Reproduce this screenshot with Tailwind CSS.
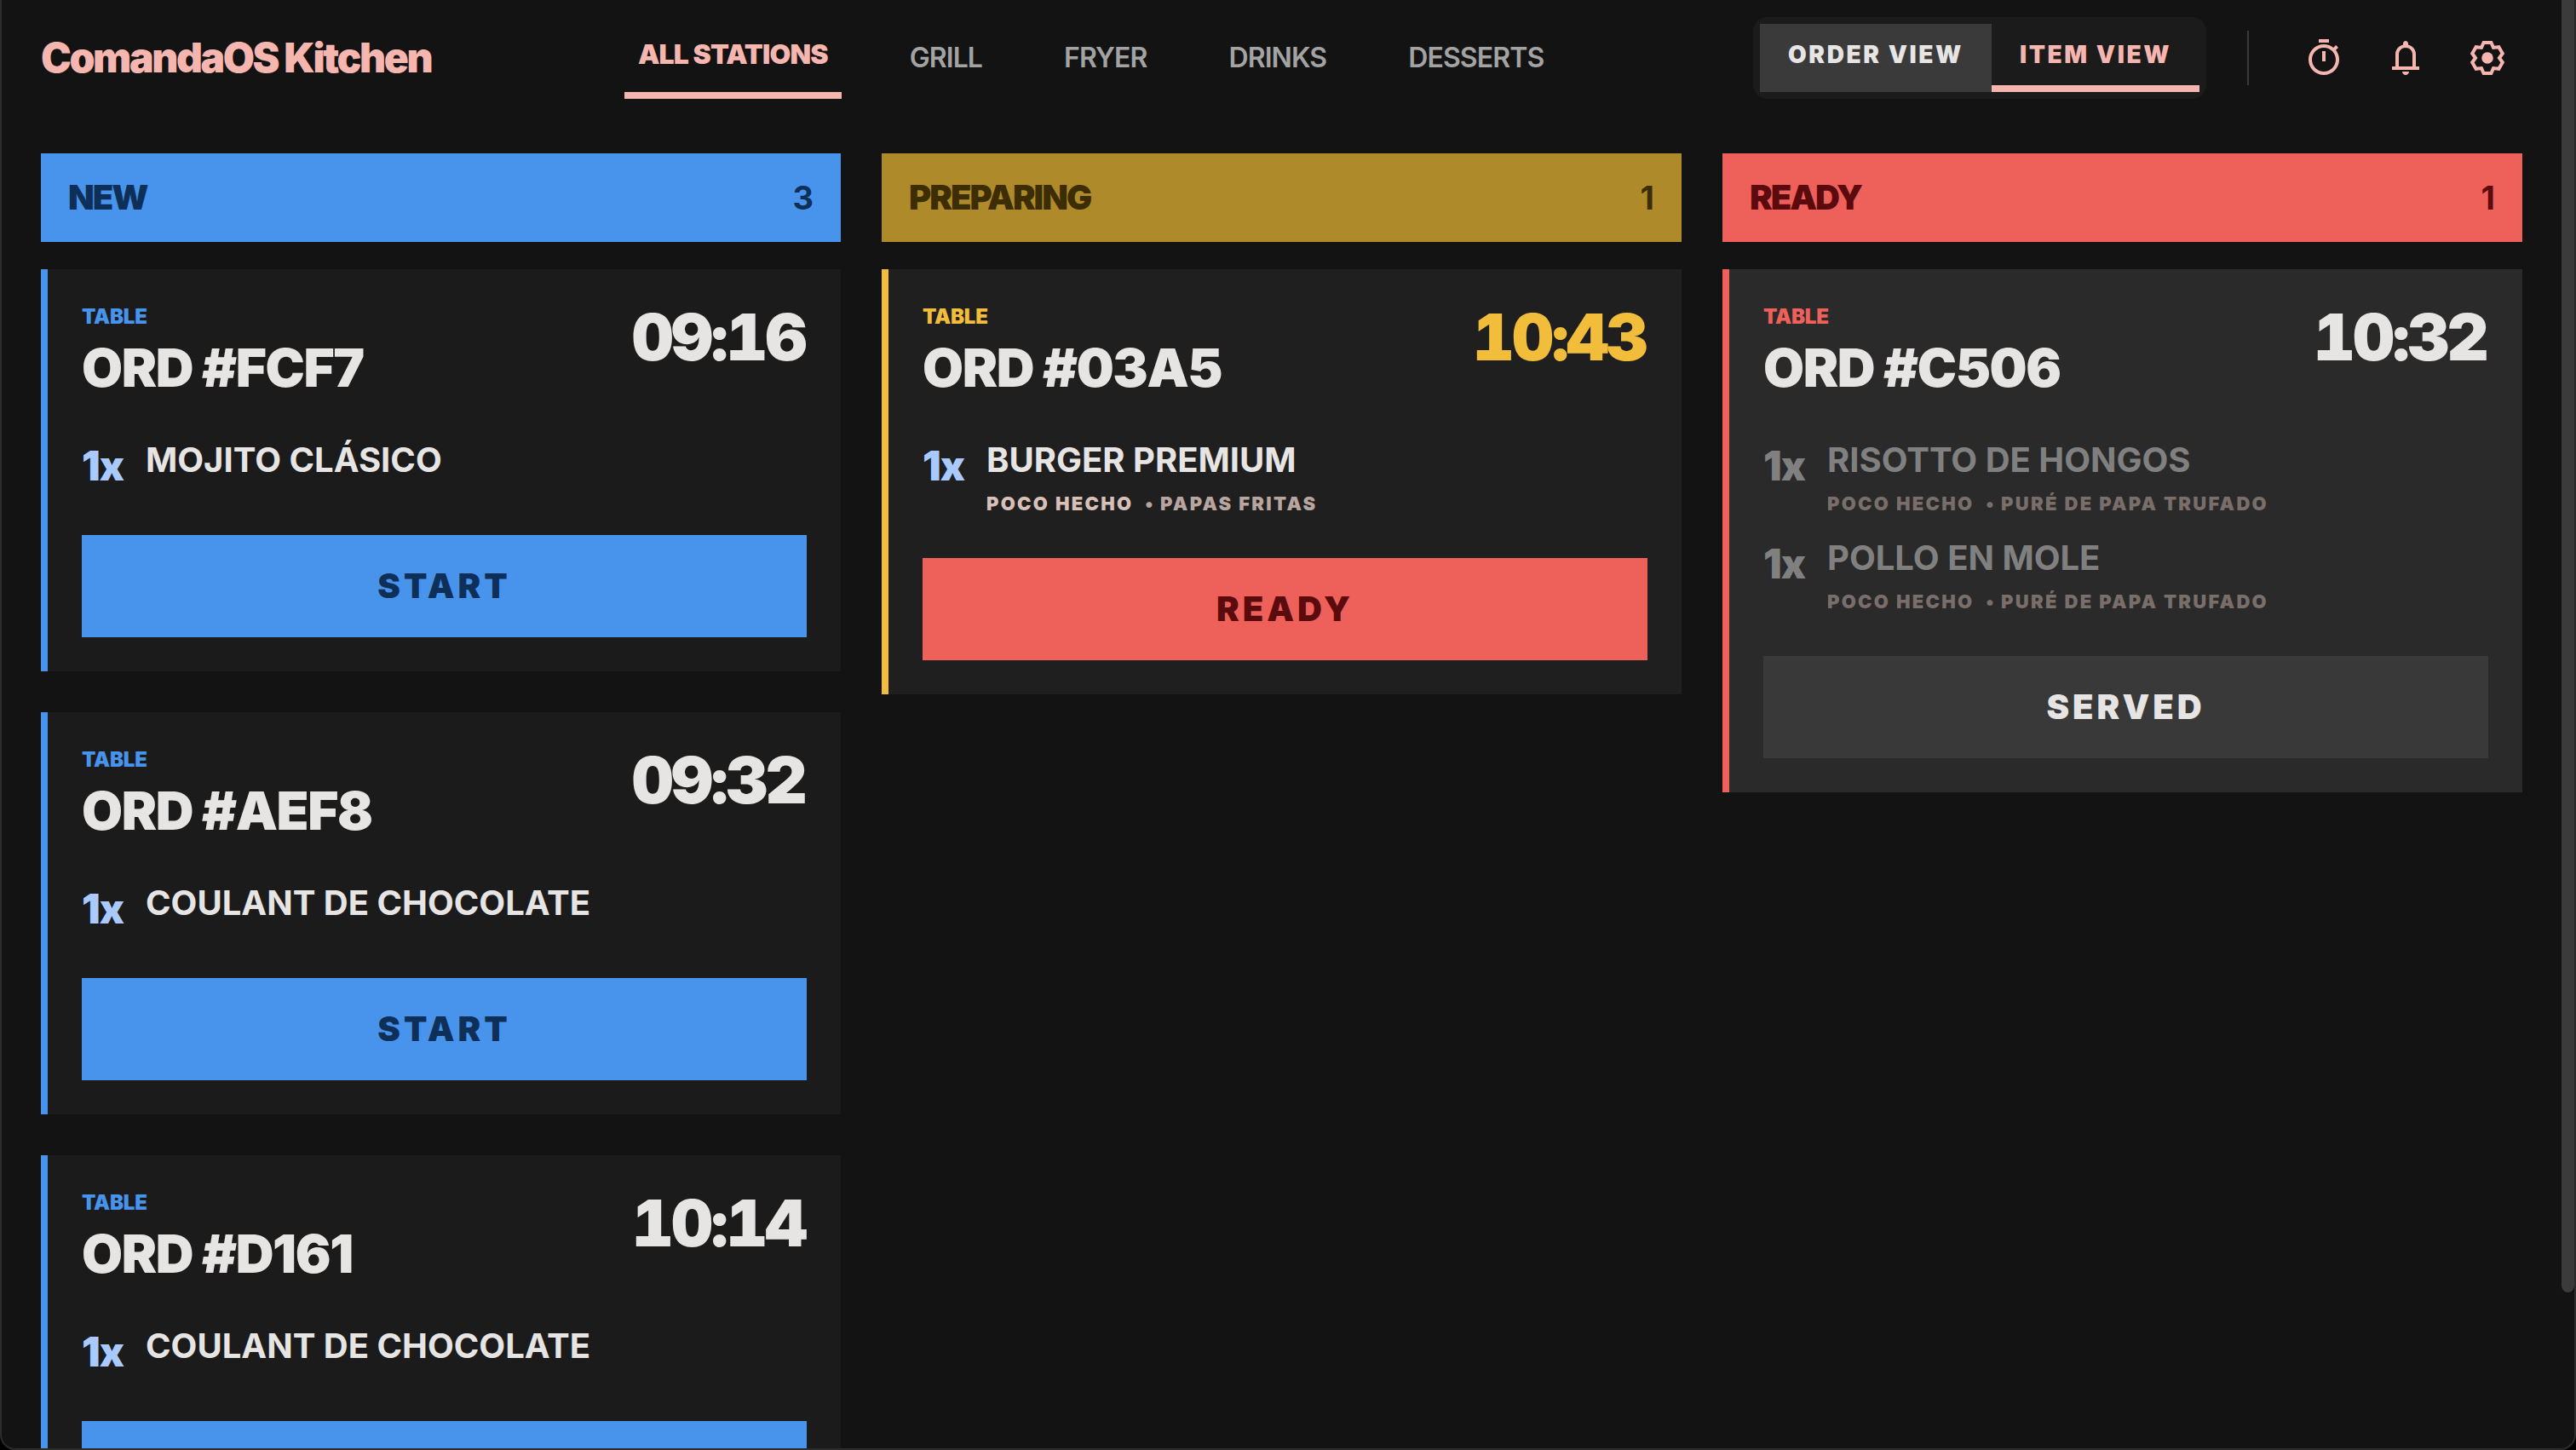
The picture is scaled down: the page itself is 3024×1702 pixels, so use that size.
<!DOCTYPE html>
<html lang="es">
  <head>
    <meta charset="UTF-8" />
    <title>ComandaOS Kitchen</title>
    <script src="https://cdn.jsdelivr.net/npm/@tailwindcss/browser@4"></script>
  </head>
  <body class="bg-black">
    <div class="relative w-[3024px] h-[1702px] overflow-hidden rounded-b-[18px] border-x-2 border-b-2 border-[#2c2c2c] bg-[#131313] font-[Inter,sans-serif] text-[#e7e5e4]">
      <!-- Barra superior -->
      <header class="flex h-[136px] items-center pl-[46px] pr-[62px]">
        <h1 class="w-[685px] shrink-0 text-[48px] font-black tracking-[-2.4px] text-[#f6b6b0]">ComandaOS Kitchen</h1>
        <nav class="flex gap-16 text-[32px] font-semibold tracking-[-0.9px] text-[#a3a3a3]">
          <a class="flex h-[96px] items-center border-b-8 border-[#f6b6b0] px-4 font-black tracking-[-0.85px] text-[#f6b6b0]">ALL STATIONS</a>
          <a class="flex h-[96px] items-center px-4">GRILL</a>
          <a class="flex h-[96px] items-center px-4">FRYER</a>
          <a class="flex h-[96px] items-center px-4">DRINKS</a>
          <a class="flex h-[96px] items-center px-4">DESSERTS</a>
        </nav>
        <div class="ml-auto flex items-center">
          <div class="flex rounded-2xl bg-[#1b1b1b] p-2 text-[28px] font-black tracking-[2.6px]">
            <button class="flex h-[80px] w-[272px] items-center justify-center bg-[#3a3a3a] pb-2">ORDER VIEW</button>
            <button class="flex h-[80px] w-[244px] items-center justify-center border-b-8 border-[#f6b6b0] text-[#f6b6b0]">ITEM VIEW</button>
          </div>
          <div class="ml-12 mr-12 h-[64px] w-[2px] bg-[#3a3a3a]"></div>
          <div class="flex gap-4 text-[#f6b6b0]">
            <button class="p-4">
              <svg class="h-12 w-12" viewBox="0 0 24 24" fill="currentColor"><path d="M15 1H9v2h6V1zm-4 13h2V8h-2v6zm8.03-6.61l1.42-1.42c-.43-.51-.9-.99-1.41-1.41l-1.42 1.42C16.07 4.74 14.12 4 12 4c-4.97 0-9 4.03-9 9s4.02 9 9 9 9-4.03 9-9c0-2.12-.74-4.07-1.97-5.61zM12 20c-3.87 0-7-3.13-7-7s3.13-7 7-7 7 3.13 7 7-3.13 7-7 7z" /></svg>
            </button>
            <button class="p-4">
              <svg class="h-12 w-12" viewBox="0 0 24 24" fill="currentColor"><path d="M4 19v-2h2v-7c0-1.38.42-2.61 1.25-3.69.83-1.08 1.92-1.79 3.25-2.11V3.5c0-.42.15-.77.44-1.06.29-.29.65-.44 1.06-.44s.77.15 1.06.44c.29.29.44.64.44 1.06v.7c1.33.33 2.42 1.03 3.25 2.11.83 1.08 1.25 2.31 1.25 3.69v7h2v2H4zm8 3c-.55 0-1.02-.2-1.41-.59-.39-.39-.59-.86-.59-1.41h4c0 .55-.2 1.02-.59 1.41-.39.39-.86.59-1.41.59zm-4-5h8v-7c0-1.1-.39-2.04-1.17-2.83C14.04 6.39 13.1 6 12 6s-2.04.39-2.83 1.17C8.39 7.96 8 8.9 8 10v7z" /></svg>
            </button>
            <button class="p-4">
              <svg class="h-12 w-12" viewBox="0 0 24 24"><path fill="none" stroke="currentColor" stroke-width="2" d="M9.8 3H14.2L15.5 5.94L18.69 5.6L20.89 9.4L19 12L20.89 14.6L18.69 18.4L15.5 18.06L14.2 21H9.8L8.5 18.06L5.31 18.4L3.11 14.6L5 12L3.11 9.4L5.31 5.6L8.5 5.94Z" /><circle cx="12" cy="12" r="3.4" fill="currentColor" /></svg>
            </button>
          </div>
        </div>
      </header>

      <!-- Columnas -->
      <main class="grid w-[2959px] grid-cols-3 gap-12 pl-[46px] pt-[44px]">
        <!-- Nuevos -->
        <section class="flex flex-col gap-12">
          <div class="-mb-4 flex h-[104px] items-center justify-between bg-[#4893ec] px-8 text-[#0e2f58]">
            <h2 class="text-[40px] font-black tracking-[-2px]">NEW</h2>
            <span class="text-[38px] font-bold">3</span>
          </div>
          <article class="border-l-8 border-[#4893ec] bg-[#1b1b1b] p-10">
            <div class="flex items-start justify-between">
              <div>
                <p class="text-[24px] leading-8 font-black tracking-[-0.2px] text-[#4893ec]">TABLE</p>
                <h3 class="mt-[14px] text-[62px] leading-[60px] font-black tracking-[-1.4px]">ORD #FCF7</h3>
              </div>
              <span class="mr-[2px] text-[76px] leading-[78px] font-black tracking-[-2.6px] tabular-nums">09:16</span>
            </div>
            <div class="mt-[54px] flex items-start gap-6">
              <span class="w-[51px] text-[48px] leading-[62px] font-black tracking-[-1px] text-[#a9c9ff]">1x</span>
              <p class="text-[40px] leading-[48px] font-bold">MOJITO CLÁSICO</p>
            </div>
            <button class="mt-[50px] h-[120px] w-full bg-[#4893ec] text-[40px] font-black tracking-[4px] text-[#0e2f58]">START</button>
          </article>
          <article class="border-l-8 border-[#4893ec] bg-[#1b1b1b] p-10">
            <div class="flex items-start justify-between">
              <div>
                <p class="text-[24px] leading-8 font-black tracking-[-0.2px] text-[#4893ec]">TABLE</p>
                <h3 class="mt-[14px] text-[62px] leading-[60px] font-black tracking-[-1.4px]">ORD #AEF8</h3>
              </div>
              <span class="mr-[2px] text-[76px] leading-[78px] font-black tracking-[-2.6px] tabular-nums">09:32</span>
            </div>
            <div class="mt-[54px] flex items-start gap-6">
              <span class="w-[51px] text-[48px] leading-[62px] font-black tracking-[-1px] text-[#a9c9ff]">1x</span>
              <p class="text-[40px] leading-[48px] font-bold">COULANT DE CHOCOLATE</p>
            </div>
            <button class="mt-[50px] h-[120px] w-full bg-[#4893ec] text-[40px] font-black tracking-[4px] text-[#0e2f58]">START</button>
          </article>
          <article class="border-l-8 border-[#4893ec] bg-[#1b1b1b] p-10">
            <div class="flex items-start justify-between">
              <div>
                <p class="text-[24px] leading-8 font-black tracking-[-0.2px] text-[#4893ec]">TABLE</p>
                <h3 class="mt-[14px] text-[62px] leading-[60px] font-black tracking-[-1.4px]">ORD #D161</h3>
              </div>
              <span class="mr-[2px] text-[76px] leading-[78px] font-black tracking-[-2.6px] tabular-nums">10:14</span>
            </div>
            <div class="mt-[54px] flex items-start gap-6">
              <span class="w-[51px] text-[48px] leading-[62px] font-black tracking-[-1px] text-[#a9c9ff]">1x</span>
              <p class="text-[40px] leading-[48px] font-bold">COULANT DE CHOCOLATE</p>
            </div>
            <button class="mt-[50px] h-[120px] w-full bg-[#4893ec] text-[40px] font-black tracking-[4px] text-[#0e2f58]">START</button>
          </article>
        </section>

        <!-- En preparación -->
        <section class="flex flex-col gap-12">
          <div class="-mb-4 flex h-[104px] items-center justify-between bg-[#ae8a2b] px-8 text-[#3d2d04]">
            <h2 class="text-[40px] font-black tracking-[-2px]">PREPARING</h2>
            <span class="text-[38px] font-bold">1</span>
          </div>
          <article class="border-l-8 border-[#f2bd3a] bg-[#1f1f1f] p-10">
            <div class="flex items-start justify-between">
              <div>
                <p class="text-[24px] leading-8 font-black tracking-[-0.2px] text-[#f2bd3a]">TABLE</p>
                <h3 class="mt-[14px] text-[62px] leading-[60px] font-black tracking-[-1.4px]">ORD #03A5</h3>
              </div>
              <span class="mr-[2px] text-[76px] leading-[78px] font-black tracking-[-2.6px] tabular-nums text-[#f2bd3a]">10:43</span>
            </div>
            <div class="mt-[54px] flex items-start gap-6">
              <span class="w-[51px] text-[48px] leading-[62px] font-black tracking-[-1px] text-[#a9c9ff]">1x</span>
              <div>
                <p class="text-[40px] leading-[48px] font-bold">BURGER PREMIUM</p>
                <p class="mt-[13px] flex gap-[14px] text-[22px] leading-[28px] font-black tracking-[2.3px]">
                  <span class="text-[#d8bfb8]">POCO HECHO</span>
                  <span class="text-[#b8a5a0]">• PAPAS FRITAS</span>
                </p>
              </div>
            </div>
            <button class="mt-[50px] h-[120px] w-full bg-[#ee605a] text-[40px] font-black tracking-[4px] text-[#5b0a0d]">READY</button>
          </article>
        </section>

        <!-- Listos -->
        <section class="flex flex-col gap-12">
          <div class="-mb-4 flex h-[104px] items-center justify-between bg-[#ee605a] px-8 text-[#5b0a0d]">
            <h2 class="text-[40px] font-black tracking-[-2px]">READY</h2>
            <span class="text-[38px] font-bold">1</span>
          </div>
          <article class="border-l-8 border-[#ee605a] bg-[#2a2a2a] p-10">
            <div class="flex items-start justify-between">
              <div>
                <p class="text-[24px] leading-8 font-black tracking-[-0.2px] text-[#ee605a]">TABLE</p>
                <h3 class="mt-[14px] text-[62px] leading-[60px] font-black tracking-[-1.4px]">ORD #C506</h3>
              </div>
              <span class="mr-[2px] text-[76px] leading-[78px] font-black tracking-[-2.6px] tabular-nums">10:32</span>
            </div>
            <div class="mt-[54px] flex items-start gap-6">
              <span class="w-[51px] text-[48px] leading-[62px] font-black tracking-[-1px] text-[#808080]">1x</span>
              <div>
                <p class="text-[40px] leading-[48px] font-bold text-[#808080]">RISOTTO DE HONGOS</p>
                <p class="mt-[13px] flex gap-[14px] text-[22px] leading-[28px] font-black tracking-[2.3px] text-[#7a6e6b]">
                  <span>POCO HECHO</span>
                  <span>• PURÉ DE PAPA TRUFADO</span>
                </p>
              </div>
            </div>
            <div class="mt-[26px] flex items-start gap-6">
              <span class="w-[51px] text-[48px] leading-[62px] font-black tracking-[-1px] text-[#808080]">1x</span>
              <div>
                <p class="text-[40px] leading-[48px] font-bold text-[#808080]">POLLO EN MOLE</p>
                <p class="mt-[13px] flex gap-[14px] text-[22px] leading-[28px] font-black tracking-[2.3px] text-[#7a6e6b]">
                  <span>POCO HECHO</span>
                  <span>• PURÉ DE PAPA TRUFADO</span>
                </p>
              </div>
            </div>
            <button class="mt-[50px] h-[120px] w-full bg-[#393939] text-[40px] font-black tracking-[4px]">SERVED</button>
          </article>
        </section>
      </main>

      <!-- Barra de desplazamiento -->
      <div class="absolute right-0 top-0 h-[1517px] w-[15px] rounded-b-full bg-[#3b3b3b]"></div>
    </div>
  </body>
</html>
